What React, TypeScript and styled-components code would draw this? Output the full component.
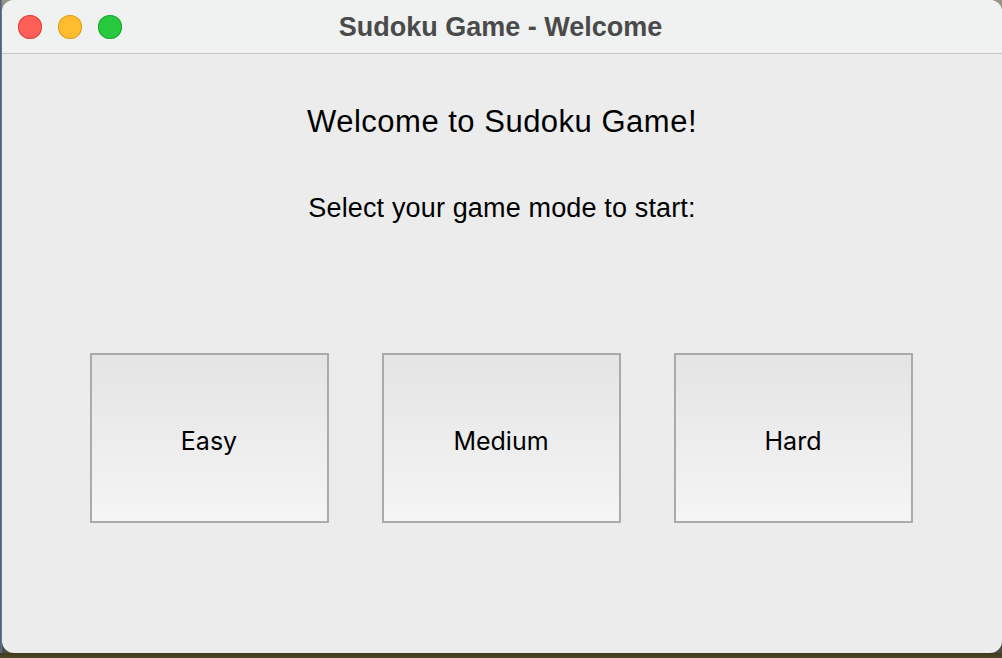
import React from "react";
import styled, { createGlobalStyle } from "styled-components";

const Global = createGlobalStyle`
  html, body {
    margin: 0;
    padding: 0;
    width: 1002px;
    height: 658px;
    overflow: hidden;
  }
  body {
    background: #3d4f6e;
    font-family: "Liberation Sans", Arial, sans-serif;
  }
`;

const Desktop = styled.div`
  width: 1002px;
  height: 658px;
  display: flex;
  padding-left: 2px;
  box-sizing: border-box;
  background:
    linear-gradient(0deg, #4d4526 0px, #3f3a1f 5px, transparent 5px),
    linear-gradient(90deg, #4b5a78 0px, #6d7a90 2px, transparent 2px),
    linear-gradient(180deg, #9a9588 0px, #8a8570 60px, #4a4a40 100%);
`;

const Window = styled.div`
  width: 1000px;
  height: 653px;
  border-radius: 12px;
  overflow: hidden;
  background: #ececec;
  display: flex;
  flex-direction: column;
`;

const TitleBar = styled.div`
  height: 53px;
  flex: 0 0 53px;
  background: #f0f1f1;
  border-bottom: 1px solid #c6c6c6;
  display: flex;
  align-items: center;
  position: relative;
`;

const Lights = styled.div`
  display: flex;
  gap: 16px;
  padding-left: 16px;
  padding-top: 1px;
`;

const Light = styled.span<{ $c: string; $b: string }>`
  width: 24px;
  height: 24px;
  border-radius: 50%;
  background: ${(p) => p.$c};
  box-shadow: inset 0 0 0 1px ${(p) => p.$b};
`;

const Title = styled.div`
  position: absolute;
  left: 0;
  right: 0;
  top: 0;
  bottom: 0;
  display: flex;
  align-items: center;
  justify-content: center;
  font-family: "Liberation Sans", Arial, sans-serif;
  font-weight: 700;
  font-size: 27px;
  color: #4a4a4a;
  padding-top: 1px;
  padding-right: 3px;
`;

const Content = styled.div`
  flex: 1;
  display: flex;
  flex-direction: column;
  align-items: center;
`;

const Heading = styled.div`
  margin-top: 50px;
  font-size: 31px;
  letter-spacing: 0.5px;
  color: #000;
  line-height: 36px;
`;

const Sub = styled.div`
  margin-top: 52px;
  font-size: 27px;
  letter-spacing: 0.15px;
  color: #000;
  line-height: 32px;
`;

const Buttons = styled.div`
  margin-top: 129px;
  display: flex;
  gap: 53px;
  padding-right: 2px;
`;

const ModeButton = styled.button`
  width: 239px;
  height: 170px;
  box-sizing: border-box;
  border: 2px solid #aaaaaa;
  background: linear-gradient(180deg, #e4e4e4 0%, #f5f5f5 100%);
  font-family: "Inter", "Liberation Sans", sans-serif;
  font-size: 25px;
  color: #000;
  display: flex;
  align-items: center;
  justify-content: center;
  padding: 6px 0 0 0;
  cursor: pointer;
`;

export default function App() {
  return (
    <>
      <Global />
      <Desktop>
        <Window>
          <TitleBar>
            <Lights>
              <Light $c="#fe5f57" $b="#e0443e" />
              <Light $c="#febc2e" $b="#dea123" />
              <Light $c="#28c840" $b="#1aab29" />
            </Lights>
            <Title>Sudoku Game - Welcome</Title>
          </TitleBar>
          <Content>
            <Heading>Welcome to Sudoku Game!</Heading>
            <Sub>Select your game mode to start:</Sub>
            <Buttons>
              <ModeButton>Easy</ModeButton>
              <ModeButton>Medium</ModeButton>
              <ModeButton>Hard</ModeButton>
            </Buttons>
          </Content>
        </Window>
      </Desktop>
    </>
  );
}
